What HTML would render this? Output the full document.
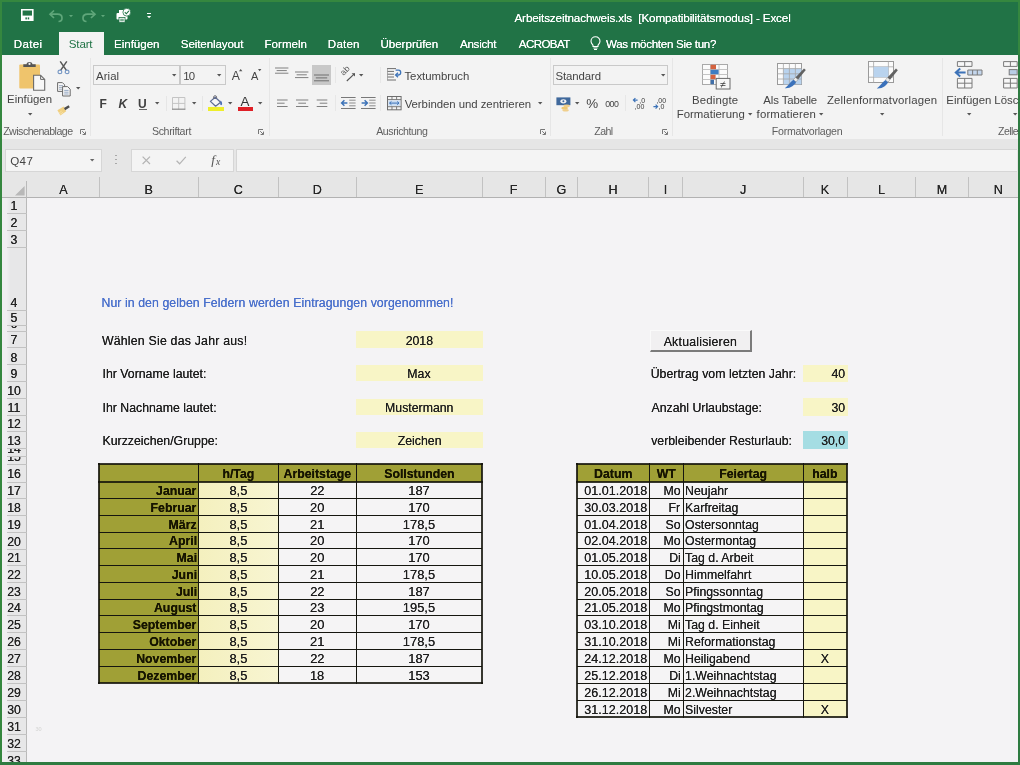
<!DOCTYPE html>
<html lang="de"><head><meta charset="utf-8"><title>Arbeitszeitnachweis.xls [Kompatibilitätsmodus] - Excel</title>
<style>
html,body{margin:0;padding:0}
body{width:1020px;height:765px;overflow:hidden;position:relative;background:#35873f;font-family:"Liberation Sans",Arial,sans-serif}
.app{position:absolute;left:0;top:0;width:1020px;height:765px;overflow:hidden;will-change:transform}
.t{position:absolute;white-space:pre;display:block}
.s{text-shadow:0 0 0.5px currentColor}
.b{position:absolute;display:block}
svg{overflow:visible}
</style></head>
<body>
<div class="app">
<div class="b" style="left:2px;top:2px;width:1016px;height:53px;background:#217346;"></div>
<div class="b" style="left:59px;top:32px;width:44.5px;height:24px;background:#f3f3f3;"></div>
<div class="b" style="left:2px;top:54.5px;width:1015.5px;height:84.5px;background:#f3f3f3;"></div>
<div class="b" style="left:2px;top:139px;width:1015.5px;height:58.5px;background:#e6e6e6;"></div>
<div class="b" style="left:27px;top:197.5px;width:990.5px;height:564.5px;background:#f4f3f5;"></div>
<div class="b" style="left:2px;top:197.5px;width:25px;height:564.5px;background:linear-gradient(90deg,#f0eff1 0,#f0eff1 18%,#e7e7e8 34%,#e7e7e8 100%);"></div>
<span class="t s" style="left:514.48px;top:11px;font-size:11.7px;line-height:13px;color:#ffffff;letter-spacing:-0.14px;">Arbeitszeitnachweis.xls  [Kompatibilitätsmodus] - Excel</span>
<span class="t s" style="left:13.75px;top:38px;font-size:11.6px;line-height:12px;color:#ffffff;letter-spacing:0.31px;">Datei</span>
<span class="t s" style="left:114.05px;top:38px;font-size:11.6px;line-height:12px;color:#ffffff;letter-spacing:-0.04px;">Einfügen</span>
<span class="t s" style="left:180.77px;top:38px;font-size:11.6px;line-height:12px;color:#ffffff;letter-spacing:-0.11px;">Seitenlayout</span>
<span class="t s" style="left:264.55px;top:38px;font-size:11.6px;line-height:12px;color:#ffffff;letter-spacing:-0.01px;">Formeln</span>
<span class="t s" style="left:327.85px;top:38px;font-size:11.6px;line-height:12px;color:#ffffff;letter-spacing:0.19px;">Daten</span>
<span class="t s" style="left:380.41px;top:38px;font-size:11.6px;line-height:12px;color:#ffffff;letter-spacing:-0.02px;">Überprüfen</span>
<span class="t s" style="left:459.98px;top:38px;font-size:11.6px;line-height:12px;color:#ffffff;letter-spacing:-0.27px;">Ansicht</span>
<span class="t s" style="left:518.78px;top:38px;font-size:11.6px;line-height:12px;color:#ffffff;letter-spacing:-0.6px;">ACROBAT</span>
<span class="t s" style="left:605.95px;top:38px;font-size:11.6px;line-height:12px;color:#ffffff;letter-spacing:-0.3px;">Was möchten Sie tun?</span>
<span class="t" style="left:68.77px;top:38px;font-size:11.6px;line-height:12px;color:#217346;letter-spacing:-0.17px;">Start</span>
<svg class="b" style="left:20.8px;top:9.2px" width="12.6" height="12" viewBox="0 0 12.6 12"><path d="M0.8,0.8H11.8V11.2H0.8Z" fill="none" stroke="#fff" stroke-width="1.6"/><rect x="0.8" y="6.6" width="11" height="4.6" fill="#fff"/><rect x="4.4" y="8.4" width="1.5" height="2" fill="#217346"/><rect x="6.7" y="8.4" width="1.5" height="2" fill="#217346"/></svg>
<svg class="b" style="left:48.5px;top:10px" width="14" height="12" viewBox="0 0 14 12"><path d="M1,4.2H8.5C11.5,4.2 13,6 13,8C13,10 11.5,11.5 9.5,11.5" fill="none" stroke="#5fa67a" stroke-width="1.7"/><path d="M5,0.5L1,4.2L5,8" fill="none" stroke="#5fa67a" stroke-width="1.7"/></svg>
<svg class="b" style="left:68.8px;top:15.2px" width="4" height="2.2" viewBox="0 0 4 2.2"><polygon points="0,0 4,0 2,2.2" fill="#5fa67a"/></svg>
<svg class="b" style="left:82px;top:10px" width="14" height="12" viewBox="0 0 14 12"><path d="M13,4.2H5.5C2.5,4.2 1,6 1,8C1,10 2.5,11.5 4.5,11.5" fill="none" stroke="#5fa67a" stroke-width="1.7"/><path d="M9,0.5L13,4.2L9,8" fill="none" stroke="#5fa67a" stroke-width="1.7"/></svg>
<svg class="b" style="left:101px;top:15.2px" width="4" height="2.2" viewBox="0 0 4 2.2"><polygon points="0,0 4,0 2,2.2" fill="#5fa67a"/></svg>
<svg class="b" style="left:115.5px;top:7.5px" width="15" height="15" viewBox="0 0 15 15"><rect x="0.5" y="5" width="11" height="6.5" rx="1" fill="#fff"/><rect x="3" y="2" width="6" height="4" fill="#fff"/><rect x="3" y="9.5" width="6" height="5" fill="#fff" stroke="#217346" stroke-width="0.8"/><circle cx="10.8" cy="4.2" r="3.9" fill="#fff" stroke="#217346" stroke-width="0.8"/><path d="M8.8,4.2L10.3,5.8L12.9,2.8" fill="none" stroke="#217346" stroke-width="1.1"/><rect x="4.2" y="10.8" width="3.6" height="0.8" fill="#217346"/><rect x="4.2" y="12.4" width="3.6" height="0.8" fill="#217346"/></svg>
<div class="b" style="left:147.2px;top:13.2px;width:4.2px;height:1.2px;background:#fff;"></div>
<svg class="b" style="left:147.2px;top:15.8px" width="4.2" height="2.2" viewBox="0 0 4.2 2.2"><polygon points="0,0 4.2,0 2.1,2.2" fill="#fff"/></svg>
<svg class="b" style="left:590px;top:36px" width="11" height="14" viewBox="0 0 11 14"><path d="M5.5,0.8C2.8,0.8 1,2.8 1,5.2C1,7 2,8 3,9.2V10.5H8V9.2C9,8 10,7 10,5.2C10,2.8 8.2,0.8 5.5,0.8Z" fill="none" stroke="#fff" stroke-width="1.1"/><path d="M3.4,12H7.6M4,13.5H7" stroke="#fff" stroke-width="1" fill="none"/></svg>
<div class="b" style="left:90px;top:57.5px;width:1px;height:78.5px;background:#e6e6e6;"></div>
<div class="b" style="left:268.5px;top:57.5px;width:1px;height:78.5px;background:#e6e6e6;"></div>
<div class="b" style="left:549.9px;top:57.5px;width:1px;height:78.5px;background:#e6e6e6;"></div>
<div class="b" style="left:672.2px;top:57.5px;width:1px;height:78.5px;background:#e6e6e6;"></div>
<div class="b" style="left:941.8px;top:57.5px;width:1px;height:78.5px;background:#e6e6e6;"></div>
<span class="t" style="left:3.16px;top:125px;font-size:10.6px;line-height:12px;color:#5e5e5e;letter-spacing:-0.51px;">Zwischenablage</span>
<svg class="b" style="left:79.5px;top:129px" width="6" height="6" viewBox="0 0 6 6"><path d="M0.5,5V0.5H5" fill="none" stroke="#777" stroke-width="1"/><path d="M2.2,2.2L5.3,5.3M5.5,2.6V5.5H2.6" fill="none" stroke="#777" stroke-width="1"/></svg>
<span class="t" style="left:151.92px;top:125px;font-size:10.6px;line-height:12px;color:#5e5e5e;letter-spacing:-0.33px;">Schriftart</span>
<svg class="b" style="left:258px;top:129px" width="6" height="6" viewBox="0 0 6 6"><path d="M0.5,5V0.5H5" fill="none" stroke="#777" stroke-width="1"/><path d="M2.2,2.2L5.3,5.3M5.5,2.6V5.5H2.6" fill="none" stroke="#777" stroke-width="1"/></svg>
<span class="t" style="left:376.18px;top:125px;font-size:10.6px;line-height:12px;color:#5e5e5e;letter-spacing:-0.42px;">Ausrichtung</span>
<svg class="b" style="left:539.5px;top:129.3px" width="6" height="6" viewBox="0 0 6 6"><path d="M0.5,5V0.5H5" fill="none" stroke="#777" stroke-width="1"/><path d="M2.2,2.2L5.3,5.3M5.5,2.6V5.5H2.6" fill="none" stroke="#777" stroke-width="1"/></svg>
<span class="t" style="left:594.36px;top:125px;font-size:10.6px;line-height:12px;color:#5e5e5e;letter-spacing:-0.6px;">Zahl</span>
<svg class="b" style="left:662px;top:129.3px" width="6" height="6" viewBox="0 0 6 6"><path d="M0.5,5V0.5H5" fill="none" stroke="#777" stroke-width="1"/><path d="M2.2,2.2L5.3,5.3M5.5,2.6V5.5H2.6" fill="none" stroke="#777" stroke-width="1"/></svg>
<span class="t" style="left:771.83px;top:125px;font-size:10.6px;line-height:12px;color:#5e5e5e;letter-spacing:-0.26px;">Formatvorlagen</span>
<span class="t" style="left:998.06px;top:125px;font-size:10.6px;line-height:12px;color:#5e5e5e;letter-spacing:-0.6px;">Zelle</span>
<svg class="b" style="left:19px;top:60.5px" width="27" height="30" viewBox="0 0 27 30"><rect x="0.3" y="3.5" width="20.7" height="24" rx="1" fill="#efc46c"/><path d="M4.3,5.9V3.2H7.6C7.6,0.2 13.4,0.2 13.4,3.2H16.7V5.9Z" fill="#555"/><circle cx="10.5" cy="2.9" r="1.1" fill="#f3f3f3"/><path d="M14.6,14.3H21.6L25.7,18.4V29.2H14.6Z" fill="#f7f7f7" stroke="#6a6a6a" stroke-width="1.1"/><path d="M21.6,14.3V18.4H25.7" fill="none" stroke="#6a6a6a" stroke-width="1"/></svg>
<span class="t" style="left:7.06px;top:93px;font-size:11.4px;line-height:12px;color:#444444;letter-spacing:-0px;">Einfügen</span>
<svg class="b" style="left:27.5px;top:112.5px" width="4.4" height="2.4" viewBox="0 0 4.4 2.4"><polygon points="0,0 4.4,0 2.2,2.4" fill="#555"/></svg>
<svg class="b" style="left:57px;top:61px" width="13" height="13.5" viewBox="0 0 13 13.5"><path d="M3.2,0.4L9.4,9.4M9.8,0.4L3.6,9.4" stroke="#585858" stroke-width="1.5" fill="none"/><ellipse cx="2.9" cy="10.9" rx="1.9" ry="1.8" fill="none" stroke="#7898c4" stroke-width="1.2"/><ellipse cx="10.1" cy="10.9" rx="1.9" ry="1.8" fill="none" stroke="#7898c4" stroke-width="1.2"/></svg>
<svg class="b" style="left:56.5px;top:82px" width="14" height="14.5" viewBox="0 0 14 14.5"><path d="M0.6,0.6H5.4L7.6,2.8V9.4H0.6Z" fill="#f7f7f7" stroke="#6a6a6a" stroke-width="1"/><path d="M2,3.6H6M2,5.4H6M2,7.2H6" stroke="#8a9bb4" stroke-width="0.8"/><path d="M5.6,4.6H10.6L13.2,7.2V14H5.6Z" fill="#f7f7f7" stroke="#6a6a6a" stroke-width="1"/><path d="M7.2,8.4H11.6M7.2,10.2H11.6M7.2,12H11.6" stroke="#7e95b8" stroke-width="0.8"/></svg>
<svg class="b" style="left:76.3px;top:87.1px" width="4.4" height="2.4" viewBox="0 0 4.4 2.4"><polygon points="0,0 4.4,0 2.2,2.4" fill="#555"/></svg>
<svg class="b" style="left:57px;top:104.5px" width="13.5" height="11.5" viewBox="0 0 13.5 11.5"><path d="M0.4,5.2L6.6,1.4L9.2,6.2L3.4,10.6Z" fill="#f0cf80"/><path d="M2.2,7.8L4.6,6.2M3.2,9.2L6.2,7.2" stroke="#f8e8b8" stroke-width="0.7"/><path d="M6.9,2.9L11.6,0.2L12.8,2.2L8.2,5.2Z" fill="#4e4e4e"/></svg>
<div class="b" style="left:93.3px;top:65.3px;width:86.7px;height:20px;border:1px solid #c9c9c9;box-sizing:border-box;"></div>
<div class="b" style="left:179.5px;top:65.3px;width:46px;height:20px;border:1px solid #c9c9c9;box-sizing:border-box;"></div>
<span class="t" style="left:95.98px;top:70px;font-size:11.4px;line-height:12px;color:#444444;letter-spacing:0.09px;">Arial</span>
<svg class="b" style="left:171.8px;top:73.9px" width="4.4" height="2.4" viewBox="0 0 4.4 2.4"><polygon points="0,0 4.4,0 2.2,2.4" fill="#555"/></svg>
<span class="t" style="left:183.13px;top:70px;font-size:11.4px;line-height:12px;color:#444444;letter-spacing:-0.6px;">10</span>
<svg class="b" style="left:217.4px;top:73.9px" width="4.4" height="2.4" viewBox="0 0 4.4 2.4"><polygon points="0,0 4.4,0 2.2,2.4" fill="#555"/></svg>
<span class="t" style="left:231.78px;top:69px;font-size:12.2px;line-height:14px;color:#444444;">A</span>
<svg class="b" style="left:239.2px;top:68.6px" width="3.4" height="2.2" viewBox="0 0 3.4 2.2"><polygon points="0,2.2 3.4,2.2 1.7,0" fill="#555"/></svg>
<span class="t" style="left:250.98px;top:70px;font-size:11px;line-height:12px;color:#444444;">A</span>
<svg class="b" style="left:258.3px;top:68.9px" width="3.4" height="2.2" viewBox="0 0 3.4 2.2"><polygon points="0,0 3.4,0 1.7,2.2" fill="#555"/></svg>
<span class="t" style="left:99.4px;top:97px;font-size:12px;line-height:14px;color:#404040;font-weight:bold;">F</span>
<span class="t" style="left:118.39px;top:97px;font-size:12px;line-height:14px;color:#404040;font-weight:bold;font-style:italic;">K</span>
<span class="t" style="left:137.88px;top:97px;font-size:12px;line-height:14px;color:#404040;font-weight:bold;">U</span>
<div class="b" style="left:138.8px;top:109.2px;width:8px;height:0.8px;background:#666;"></div>
<svg class="b" style="left:155.4px;top:101.6px" width="4.4" height="2.4" viewBox="0 0 4.4 2.4"><polygon points="0,0 4.4,0 2.2,2.4" fill="#555"/></svg>
<div class="b" style="left:165.5px;top:96px;width:1px;height:15px;background:#e6e6e6;"></div>
<svg class="b" style="left:172.4px;top:96.7px" width="13.4" height="12.8" viewBox="0 0 13.4 12.8"><path d="M0.5,0.5H12.9V12.3M0.5,0.5V12.3M6.7,0.5V12.3M0.5,6.4H12.9" fill="none" stroke="#c4c4c4" stroke-width="1"/><path d="M0,12.2H13.4" stroke="#8a8a8a" stroke-width="1.2"/></svg>
<svg class="b" style="left:191.8px;top:101.6px" width="4.4" height="2.4" viewBox="0 0 4.4 2.4"><polygon points="0,0 4.4,0 2.2,2.4" fill="#555"/></svg>
<div class="b" style="left:202.2px;top:96px;width:1px;height:15px;background:#e6e6e6;"></div>
<svg class="b" style="left:209px;top:94.6px" width="14.5" height="12" viewBox="0 0 14.5 12"><path d="M6.2,2.2L11.6,7.2L6.6,11.2L1.4,6.4Z" fill="#f6f6f8" stroke="#5f6d94" stroke-width="1.25" stroke-linejoin="round"/><path d="M4.6,3.8V2C4.6,0.2 7.6,0.2 7.6,2V3.4" fill="none" stroke="#6a6a72" stroke-width="0.9"/><path d="M11.4,5.6C12.8,6.6 13.4,8.2 13,9.6C12.4,10.6 11.2,10.2 11.2,9Z" fill="#4c6fb4"/></svg>
<div class="b" style="left:207.7px;top:107px;width:16.6px;height:3.7px;background:#eeee2a;"></div>
<svg class="b" style="left:228.2px;top:101.6px" width="4.4" height="2.4" viewBox="0 0 4.4 2.4"><polygon points="0,0 4.4,0 2.2,2.4" fill="#555"/></svg>
<span class="t" style="left:240.57px;top:94px;font-size:13.4px;line-height:15px;color:#333;">A</span>
<div class="b" style="left:238px;top:107px;width:15.3px;height:3.7px;background:#df1f26;"></div>
<svg class="b" style="left:257.8px;top:101.6px" width="4.4" height="2.4" viewBox="0 0 4.4 2.4"><polygon points="0,0 4.4,0 2.2,2.4" fill="#555"/></svg>
<svg class="b" style="left:275.3px;top:67.2px" width="20" height="8.2" viewBox="0 0 20 8.2"><rect x="0" y="0.5" width="13.4" height="1" fill="#808080"/><rect x="1.6" y="3.1" width="10.2" height="1" fill="#808080"/><rect x="0" y="5.7" width="13.4" height="1" fill="#808080"/></svg>
<svg class="b" style="left:295px;top:71.2px" width="20" height="8.6" viewBox="0 0 20 8.6"><rect x="0" y="0.5" width="13.4" height="1" fill="#808080"/><rect x="1.6" y="3.3" width="10.2" height="1" fill="#808080"/><rect x="0" y="6.1" width="13.4" height="1" fill="#808080"/></svg>
<div class="b" style="left:312px;top:65.3px;width:19.3px;height:20px;background:#c8c8c8;"></div>
<svg class="b" style="left:313.8px;top:73.9px" width="20" height="8.8" viewBox="0 0 20 8.8"><rect x="0" y="0.5" width="15" height="1" fill="#6e6e6e"/><rect x="1.8" y="3.4" width="11.4" height="1" fill="#6e6e6e"/><rect x="0" y="6.3" width="15" height="1" fill="#6e6e6e"/></svg>
<div class="b" style="left:334.5px;top:67px;width:1px;height:16px;background:#e7e7e7;"></div>
<svg class="b" style="left:340.5px;top:68.5px" width="15" height="12.5" viewBox="0 0 15 12.5"><text x="0" y="0" transform="translate(2.6,7) rotate(-45)" font-size="8.6" font-family="Liberation Sans, sans-serif" fill="#555">ab</text><path d="M5.8,12L13.6,4.6" stroke="#555" stroke-width="1.1"/><path d="M10.6,4.2H14V7.6Z" fill="#555"/></svg>
<svg class="b" style="left:359px;top:73.9px" width="4.4" height="2.4" viewBox="0 0 4.4 2.4"><polygon points="0,0 4.4,0 2.2,2.4" fill="#555"/></svg>
<div class="b" style="left:380.2px;top:67px;width:1px;height:16px;background:#e7e7e7;"></div>
<svg class="b" style="left:276.7px;top:98.6px" width="20" height="9.5" viewBox="0 0 20 9.5"><rect x="0" y="0.5" width="10.6" height="1" fill="#808080"/><rect x="0" y="3.7" width="7.6" height="1" fill="#808080"/><rect x="0" y="7" width="10.6" height="1" fill="#808080"/></svg>
<svg class="b" style="left:295.7px;top:98.6px" width="20" height="9.5" viewBox="0 0 20 9.5"><rect x="0" y="0.5" width="12.3" height="1" fill="#808080"/><rect x="2.3" y="3.7" width="7.7" height="1" fill="#808080"/><rect x="0" y="7" width="12.3" height="1" fill="#808080"/></svg>
<svg class="b" style="left:316px;top:98.6px" width="20" height="9.5" viewBox="0 0 20 9.5"><rect x="0.7" y="0.5" width="10.6" height="1" fill="#808080"/><rect x="3.7" y="3.7" width="7.6" height="1" fill="#808080"/><rect x="0.7" y="7" width="10.6" height="1" fill="#808080"/></svg>
<div class="b" style="left:334.5px;top:95px;width:1px;height:16px;background:#e7e7e7;"></div>
<svg class="b" style="left:340.7px;top:97.3px" width="14.6" height="12" viewBox="0 0 14.6 12"><path d="M0,0.5H14.6M0,11.5H14.6" stroke="#777" stroke-width="1"/><path d="M8.2,3.2H14.6M8.2,6H14.6M8.2,8.8H14.6" stroke="#8c8c8c" stroke-width="1"/><path d="M0.6,6H6.4M3.4,3.2L0.6,6L3.4,8.8" fill="none" stroke="#3d73b8" stroke-width="1.5"/></svg>
<svg class="b" style="left:360.7px;top:97.3px" width="14.6" height="12" viewBox="0 0 14.6 12"><path d="M0,0.5H14.6M0,11.5H14.6" stroke="#777" stroke-width="1"/><path d="M8.2,3.2H14.6M8.2,6H14.6M8.2,8.8H14.6" stroke="#8c8c8c" stroke-width="1"/><path d="M0.6,6H6.4M3.6,3.2L6.4,6L3.6,8.8" fill="none" stroke="#3d73b8" stroke-width="1.5"/></svg>
<div class="b" style="left:380.2px;top:95px;width:1px;height:16px;background:#e7e7e7;"></div>
<svg class="b" style="left:387px;top:68px" width="14.5" height="14" viewBox="0 0 14.5 14"><path d="M0,0.6H9M0,3.4H7M0,6.2H7M0,9H7M0,12H9" stroke="#6e6e6e" stroke-width="1"/><path d="M0.5,0.6V12" stroke="#9a9a9a" stroke-width="0.8"/><path d="M8.6,2.2H11.6C14.4,2.2 14.4,7 11.6,7H9.2" fill="none" stroke="#3d73b8" stroke-width="1.3"/><path d="M11,4.8L8.6,7L11,9.2" fill="none" stroke="#3d73b8" stroke-width="1.3"/></svg>
<span class="t" style="left:404.44px;top:70px;font-size:11.4px;line-height:12px;color:#444444;letter-spacing:-0.03px;">Textumbruch</span>
<svg class="b" style="left:387px;top:95.7px" width="14.6" height="14.3" viewBox="0 0 14.6 14.3"><rect x="0.5" y="0.5" width="13.6" height="13.3" fill="none" stroke="#6e6e6e" stroke-width="1"/><path d="M0.5,3.6H14.1M0.5,10.7H14.1M5,0.5V3.6M9.6,0.5V3.6M5,10.7V13.8M9.6,10.7V13.8" stroke="#6e6e6e" stroke-width="0.9" fill="none"/><rect x="1.4" y="4.5" width="11.8" height="5.3" fill="#c9dcf2"/><path d="M2.6,7.1H12M4.4,5.5L2.6,7.1L4.4,8.7M10.2,5.5L12,7.1L10.2,8.7" fill="none" stroke="#3d73b8" stroke-width="1"/></svg>
<span class="t" style="left:404.65px;top:98px;font-size:11.4px;line-height:12px;color:#444444;letter-spacing:-0.04px;">Verbinden und zentrieren</span>
<svg class="b" style="left:538.1px;top:101.6px" width="4.4" height="2.4" viewBox="0 0 4.4 2.4"><polygon points="0,0 4.4,0 2.2,2.4" fill="#555"/></svg>
<div class="b" style="left:553.3px;top:65.3px;width:115px;height:20px;border:1px solid #c9c9c9;box-sizing:border-box;"></div>
<span class="t" style="left:555.48px;top:70px;font-size:11.4px;line-height:12px;color:#444444;letter-spacing:-0.1px;">Standard</span>
<svg class="b" style="left:660.8px;top:73.9px" width="4.4" height="2.4" viewBox="0 0 4.4 2.4"><polygon points="0,0 4.4,0 2.2,2.4" fill="#555"/></svg>
<svg class="b" style="left:555.5px;top:96.5px" width="15.5" height="14.5" viewBox="0 0 15.5 14.5"><rect x="0.4" y="0.4" width="14" height="7.8" fill="#40699c"/><ellipse cx="7.4" cy="4.3" rx="3" ry="2.1" fill="#f3f3f3"/><circle cx="7.4" cy="4.3" r="1" fill="#40699c"/><ellipse cx="10.6" cy="9" rx="3.2" ry="1.4" fill="#f0cf8c"/><ellipse cx="8.6" cy="11.2" rx="3.2" ry="1.4" fill="#efc873"/><ellipse cx="9.6" cy="13.2" rx="3.2" ry="1.3" fill="#f0cf8c"/></svg>
<svg class="b" style="left:575.4px;top:101.6px" width="4.4" height="2.4" viewBox="0 0 4.4 2.4"><polygon points="0,0 4.4,0 2.2,2.4" fill="#555"/></svg>
<span class="t" style="left:586.32px;top:96px;font-size:13.4px;line-height:15px;color:#444444;">%</span>
<span class="t" style="left:605.16px;top:99px;font-size:8.8px;line-height:10px;color:#444444;letter-spacing:-0.5px;">000</span>
<div class="b" style="left:624.8px;top:95px;width:1px;height:16px;background:#e7e7e7;"></div>
<svg class="b" style="left:633.3px;top:97.3px" width="12.6" height="12.8" viewBox="0 0 12.6 12.8"><path d="M0.4,3.1H4.6M2.4,1.1L0.4,3.1L2.4,5.1" fill="none" stroke="#3d73b8" stroke-width="1.2"/><text x="6.2" y="5.6" font-size="7" font-family="Liberation Sans, sans-serif" fill="#3a3a3a">,0</text><text x="1.6" y="12.4" font-size="7" font-family="Liberation Sans, sans-serif" fill="#3a3a3a">,00</text></svg>
<svg class="b" style="left:652.7px;top:97.3px" width="12.6" height="12.8" viewBox="0 0 12.6 12.8"><path d="M0.4,9.6H4.6M2.6,7.6L4.6,9.6L2.6,11.6" fill="none" stroke="#3d73b8" stroke-width="1.2"/><text x="3.4" y="5.6" font-size="7" font-family="Liberation Sans, sans-serif" fill="#3a3a3a">,00</text><text x="5.6" y="12.4" font-size="7" font-family="Liberation Sans, sans-serif" fill="#3a3a3a">,0</text></svg>
<svg class="b" style="left:702.4px;top:64px" width="28.5" height="25.5" viewBox="0 0 28.5 25.5"><rect x="0.5" y="0.5" width="25" height="20" fill="#fbfbfb" stroke="#a9a9a9" stroke-width="1"/><path d="M0.5,5.5H25.5M0.5,10.5H25.5M0.5,15.5H25.5M8.5,0.5V20.5M17,0.5V20.5" stroke="#bdbdbd" stroke-width="0.9"/><rect x="8.6" y="0.8" width="5.4" height="4.4" fill="#d4623f"/><rect x="8.6" y="5.8" width="8" height="4.4" fill="#3c7cc2"/><rect x="8.6" y="10.8" width="5" height="4.4" fill="#d4623f"/><rect x="8.6" y="15.8" width="3.4" height="4.4" fill="#3f6ea8"/><rect x="14.2" y="14.4" width="13.8" height="10.6" fill="#f7f7f7" stroke="#6a6a6a" stroke-width="1"/><text x="21.1" y="23.6" text-anchor="middle" font-size="10.5" font-family="Liberation Sans, sans-serif" fill="#3c3c3c">≠</text></svg>
<span class="t" style="left:692.06px;top:94px;font-size:11.4px;line-height:12px;color:#444444;letter-spacing:0.15px;">Bedingte</span>
<span class="t" style="left:676.66px;top:108px;font-size:11.4px;line-height:12px;color:#444444;letter-spacing:0.03px;">Formatierung</span>
<svg class="b" style="left:747.8px;top:112.5px" width="4.4" height="2.4" viewBox="0 0 4.4 2.4"><polygon points="0,0 4.4,0 2.2,2.4" fill="#555"/></svg>
<svg class="b" style="left:777.3px;top:63.3px" width="29" height="26.5" viewBox="0 0 29 26.5"><rect x="0.5" y="0.5" width="24" height="21" fill="#fbfbfb" stroke="#9a9a9a" stroke-width="1"/><rect x="6.4" y="5.6" width="18" height="15.8" fill="#b9d3ee"/><path d="M0.5,5.6H24.5M0.5,10.8H24.5M0.5,16H24.5M6.4,0.5V21.5M12.4,0.5V21.5M18.4,0.5V21.5" stroke="#a6a6a6" stroke-width="0.8"/><g transform="translate(7.4,5.2)"><path d="M19.6,0.2L21.4,1.8L13.6,11.4L11,9.2Z" fill="#626262"/><path d="M11,9.2L13.6,11.4L11.6,13.8L9,11.6Z" fill="#ececec" stroke="#8a8a8a" stroke-width="0.5"/><path d="M9,11.6L11.6,13.8C10,17 6.4,20.4 0.4,20C3.2,18.4 5.2,14.6 9,11.6Z" fill="#3b72bb"/></g></svg>
<span class="t" style="left:763.28px;top:94px;font-size:11.4px;line-height:12px;color:#444444;letter-spacing:-0.1px;">Als Tabelle</span>
<span class="t" style="left:756.54px;top:108px;font-size:11.4px;line-height:12px;color:#444444;letter-spacing:0.18px;">formatieren</span>
<svg class="b" style="left:819.3px;top:112.5px" width="4.4" height="2.4" viewBox="0 0 4.4 2.4"><polygon points="0,0 4.4,0 2.2,2.4" fill="#555"/></svg>
<svg class="b" style="left:868px;top:60.7px" width="30" height="28" viewBox="0 0 30 28"><rect x="0.5" y="0.5" width="25" height="21" fill="#fbfbfb" stroke="#9a9a9a" stroke-width="1"/><path d="M0.5,5.8H25.5M0.5,16.2H25.5M5.6,0.5V21.5M20.4,0.5V21.5" stroke="#a6a6a6" stroke-width="0.8"/><rect x="5.6" y="5.8" width="14.8" height="10.4" fill="#b9d3ee"/><g transform="translate(8.4,7.4)"><path d="M19.6,0.2L21.4,1.8L13.6,11.4L11,9.2Z" fill="#626262"/><path d="M11,9.2L13.6,11.4L11.6,13.8L9,11.6Z" fill="#ececec" stroke="#8a8a8a" stroke-width="0.5"/><path d="M9,11.6L11.6,13.8C10,17 6.4,20.4 0.4,20C3.2,18.4 5.2,14.6 9,11.6Z" fill="#3b72bb"/></g></svg>
<span class="t" style="left:826.94px;top:94px;font-size:11.4px;line-height:12px;color:#444444;letter-spacing:0.16px;">Zellenformatvorlagen</span>
<svg class="b" style="left:880.3px;top:112.5px" width="4.4" height="2.4" viewBox="0 0 4.4 2.4"><polygon points="0,0 4.4,0 2.2,2.4" fill="#555"/></svg>
<svg class="b" style="left:955px;top:61px" width="27.5" height="27.5" viewBox="0 0 27.5 27.5"><path d="M2.4,0.6H17V5.4H2.4ZM9.7,0.6V5.4" fill="#f7f7f7" stroke="#7a7a7a" stroke-width="1"/><path d="M12.8,9H27V14H12.8ZM17.6,9V14M22.3,9V14" fill="#c4d6ec" stroke="#7a7a7a" stroke-width="1"/><path d="M0.8,11.5H10.6M5.2,7.6L0.8,11.5L5.2,15.4" fill="none" stroke="#3d73b8" stroke-width="2"/><path d="M2.4,17.4H17V27H2.4ZM9.7,17.4V27M2.4,22.2H17" fill="#f7f7f7" stroke="#7a7a7a" stroke-width="1"/></svg>
<span class="t" style="left:946.36px;top:94px;font-size:11.4px;line-height:12px;color:#444444;letter-spacing:0.01px;">Einfügen</span>
<svg class="b" style="left:967px;top:112.5px" width="4.4" height="2.4" viewBox="0 0 4.4 2.4"><polygon points="0,0 4.4,0 2.2,2.4" fill="#555"/></svg>
<svg class="b" style="left:1003.3px;top:61px" width="14.2" height="27.5" viewBox="0 0 14.2 27.5"><path d="M0.6,0.6H14.2V5.4H0.6ZM7.4,0.6V5.4" fill="#f7f7f7" stroke="#7a7a7a" stroke-width="1"/><rect x="6.2" y="8.6" width="8" height="5.2" fill="#b9cde6" stroke="#7a7a7a" stroke-width="1"/><path d="M0.6,17.4H14.2V27H0.6ZM7.4,17.4V27M0.6,22.2H14.2" fill="#f7f7f7" stroke="#7a7a7a" stroke-width="1"/></svg>
<span class="t" style="left:994.36px;top:94px;font-size:11.4px;line-height:12px;color:#444444;">Lösc</span>
<svg class="b" style="left:1013.4px;top:112.5px" width="4.4" height="2.4" viewBox="0 0 4.4 2.4"><polygon points="0,0 4.4,0 2.2,2.4" fill="#555"/></svg>
<div class="b" style="left:5px;top:149px;width:96.5px;height:22.6px;background:#f4f4f4;border:1px solid #d6d6d6;box-sizing:border-box;"></div>
<span class="t" style="left:10.15px;top:155px;font-size:11.6px;line-height:12px;color:#444;letter-spacing:0.4px;">Q47</span>
<svg class="b" style="left:90.1px;top:159.2px" width="4.4" height="2.4" viewBox="0 0 4.4 2.4"><polygon points="0,0 4.4,0 2.2,2.4" fill="#666"/></svg>
<div class="b" style="left:115.3px;top:154.6px;width:1.4px;height:1.4px;background:#a0a0a0;border-radius:1px;"></div>
<div class="b" style="left:115.3px;top:158.6px;width:1.4px;height:1.4px;background:#a0a0a0;border-radius:1px;"></div>
<div class="b" style="left:115.3px;top:162.6px;width:1.4px;height:1.4px;background:#a0a0a0;border-radius:1px;"></div>
<div class="b" style="left:130.6px;top:149px;width:103.8px;height:22.6px;background:#f4f4f4;border:1px solid #d6d6d6;box-sizing:border-box;"></div>
<svg class="b" style="left:142.4px;top:156px" width="8.6" height="8.6" viewBox="0 0 8.6 8.6"><path d="M0.6,0.6L8,8M8,0.6L0.6,8" stroke="#b4b4b4" stroke-width="1.2" fill="none"/></svg>
<svg class="b" style="left:176.4px;top:156px" width="10.4" height="8.6" viewBox="0 0 10.4 8.6"><path d="M0.6,4.8L3.6,7.8L9.8,0.8" stroke="#b4b4b4" stroke-width="1.2" fill="none"/></svg>
<span class="t" style="left:211.15px;top:152px;font-size:13.4px;line-height:15px;color:#555;font-style:italic;font-family:'Liberation Serif',serif;">f</span>
<span class="t" style="left:215.98px;top:156px;font-size:9.6px;line-height:11px;color:#555;font-style:italic;font-family:'Liberation Serif',serif;">x</span>
<div class="b" style="left:236.2px;top:149px;width:781.3px;height:22.6px;background:#f4f4f4;border:1px solid #d6d6d6;border-right:none;box-sizing:border-box;"></div>
<div class="b" style="left:2px;top:196.8px;width:1015.5px;height:1px;background:#b2b2b2;"></div>
<span class="t s" style="left:59.25px;top:183px;font-size:12.6px;line-height:14px;color:#262626;">A</span>
<div class="b" style="left:99px;top:176.5px;width:1px;height:20.5px;background:#c2c2c2;"></div>
<span class="t s" style="left:144.56px;top:183px;font-size:12.6px;line-height:14px;color:#262626;">B</span>
<div class="b" style="left:197.5px;top:176.5px;width:1px;height:20.5px;background:#c2c2c2;"></div>
<span class="t s" style="left:233.82px;top:183px;font-size:12.6px;line-height:14px;color:#262626;">C</span>
<div class="b" style="left:278px;top:176.5px;width:1px;height:20.5px;background:#c2c2c2;"></div>
<span class="t s" style="left:312.68px;top:183px;font-size:12.6px;line-height:14px;color:#262626;">D</span>
<div class="b" style="left:355.5px;top:176.5px;width:1px;height:20.5px;background:#c2c2c2;"></div>
<span class="t s" style="left:415px;top:183px;font-size:12.6px;line-height:14px;color:#262626;">E</span>
<div class="b" style="left:482px;top:176.5px;width:1px;height:20.5px;background:#c2c2c2;"></div>
<span class="t s" style="left:509.84px;top:183px;font-size:12.6px;line-height:14px;color:#262626;">F</span>
<div class="b" style="left:544.5px;top:176.5px;width:1px;height:20.5px;background:#c2c2c2;"></div>
<span class="t s" style="left:556.45px;top:183px;font-size:12.6px;line-height:14px;color:#262626;">G</span>
<div class="b" style="left:576.5px;top:176.5px;width:1px;height:20.5px;background:#c2c2c2;"></div>
<span class="t s" style="left:608.4px;top:183px;font-size:12.6px;line-height:14px;color:#262626;">H</span>
<div class="b" style="left:648px;top:176.5px;width:1px;height:20.5px;background:#c2c2c2;"></div>
<span class="t s" style="left:663.7px;top:183px;font-size:12.6px;line-height:14px;color:#262626;">I</span>
<div class="b" style="left:681.5px;top:176.5px;width:1px;height:20.5px;background:#c2c2c2;"></div>
<span class="t s" style="left:739.92px;top:183px;font-size:12.6px;line-height:14px;color:#262626;">J</span>
<div class="b" style="left:802.5px;top:176.5px;width:1px;height:20.5px;background:#c2c2c2;"></div>
<span class="t s" style="left:820.8px;top:183px;font-size:12.6px;line-height:14px;color:#262626;">K</span>
<div class="b" style="left:847px;top:176.5px;width:1px;height:20.5px;background:#c2c2c2;"></div>
<span class="t s" style="left:877.89px;top:183px;font-size:12.6px;line-height:14px;color:#262626;">L</span>
<div class="b" style="left:915px;top:176.5px;width:1px;height:20.5px;background:#c2c2c2;"></div>
<span class="t s" style="left:936.7px;top:183px;font-size:12.6px;line-height:14px;color:#262626;">M</span>
<div class="b" style="left:967.5px;top:176.5px;width:1px;height:20.5px;background:#c2c2c2;"></div>
<span class="t s" style="left:993.65px;top:183px;font-size:12.6px;line-height:14px;color:#262626;">N</span>
<div class="b" style="left:1027.5px;top:176.5px;width:1px;height:20.5px;background:#c2c2c2;"></div>
<div class="b" style="left:26.3px;top:180.5px;width:1px;height:581.5px;background:#b9b9b9;"></div>
<svg class="b" style="left:15.2px;top:185.5px" width="9.6" height="9.6" viewBox="0 0 9.6 9.6"><polygon points="9.6,0 9.6,9.6 0,9.6" fill="#b8b8b8"/></svg>
<div class="b" style="left:2.5px;top:197.8px;width:24px;height:16px;overflow:hidden"><span class="t" style="left:0;width:23px;text-align:center;top:1.2px;font-size:12.3px;line-height:14px;color:#242424;text-shadow:0 0 0.5px #242424">1</span></div>
<div class="b" style="left:7px;top:213.3px;width:20px;height:1px;background:#c2c2c2;"></div>
<div class="b" style="left:2.5px;top:214.3px;width:24px;height:16.3px;overflow:hidden"><span class="t" style="left:0;width:23px;text-align:center;top:1.7px;font-size:12.3px;line-height:14px;color:#242424;text-shadow:0 0 0.5px #242424">2</span></div>
<div class="b" style="left:7px;top:230.1px;width:20px;height:1px;background:#c2c2c2;"></div>
<div class="b" style="left:2.5px;top:231.1px;width:24px;height:16.2px;overflow:hidden"><span class="t" style="left:0;width:23px;text-align:center;top:1.9px;font-size:12.3px;line-height:14px;color:#242424;text-shadow:0 0 0.5px #242424">3</span></div>
<div class="b" style="left:7px;top:246.8px;width:20px;height:1px;background:#c2c2c2;"></div>
<div class="b" style="left:2.5px;top:247.8px;width:24px;height:62.5px;overflow:hidden"><span class="t" style="left:0;width:23px;text-align:center;top:48.2px;font-size:12.3px;line-height:14px;color:#242424;text-shadow:0 0 0.5px #242424">4</span></div>
<div class="b" style="left:7px;top:309.8px;width:20px;height:1px;background:#c2c2c2;"></div>
<div class="b" style="left:2.5px;top:310.8px;width:24px;height:14.5px;overflow:hidden"><span class="t" style="left:0;width:23px;text-align:center;top:0.2px;font-size:12.3px;line-height:14px;color:#242424;text-shadow:0 0 0.5px #242424">5</span></div>
<div class="b" style="left:7px;top:324.8px;width:20px;height:1px;background:#c2c2c2;"></div>
<div class="b" style="left:2.5px;top:325.8px;width:24px;height:5.4px;overflow:hidden"><span class="t" style="left:0;width:23px;text-align:center;top:-8.8px;font-size:12.3px;line-height:14px;color:#242424;text-shadow:0 0 0.5px #242424">6</span></div>
<div class="b" style="left:7px;top:330.7px;width:20px;height:1px;background:#c2c2c2;"></div>
<div class="b" style="left:2.5px;top:331.7px;width:24px;height:16.2px;overflow:hidden"><span class="t" style="left:0;width:23px;text-align:center;top:1.3px;font-size:12.3px;line-height:14px;color:#242424;text-shadow:0 0 0.5px #242424">7</span></div>
<div class="b" style="left:7px;top:347.4px;width:20px;height:1px;background:#c2c2c2;"></div>
<div class="b" style="left:2.5px;top:348.4px;width:24px;height:16.5px;overflow:hidden"><span class="t" style="left:0;width:23px;text-align:center;top:2.6px;font-size:12.3px;line-height:14px;color:#242424;text-shadow:0 0 0.5px #242424">8</span></div>
<div class="b" style="left:7px;top:364.4px;width:20px;height:1px;background:#c2c2c2;"></div>
<div class="b" style="left:2.5px;top:365.4px;width:24px;height:16.2px;overflow:hidden"><span class="t" style="left:0;width:23px;text-align:center;top:1.6px;font-size:12.3px;line-height:14px;color:#242424;text-shadow:0 0 0.5px #242424">9</span></div>
<div class="b" style="left:7px;top:381.1px;width:20px;height:1px;background:#c2c2c2;"></div>
<div class="b" style="left:2.5px;top:382.1px;width:24px;height:16.3px;overflow:hidden"><span class="t" style="left:0;width:23px;text-align:center;top:1.9px;font-size:12.3px;line-height:14px;color:#242424;text-shadow:0 0 0.5px #242424">10</span></div>
<div class="b" style="left:7px;top:397.9px;width:20px;height:1px;background:#c2c2c2;"></div>
<div class="b" style="left:2.5px;top:398.9px;width:24px;height:16.2px;overflow:hidden"><span class="t" style="left:0;width:23px;text-align:center;top:2.1px;font-size:12.3px;line-height:14px;color:#242424;text-shadow:0 0 0.5px #242424">11</span></div>
<div class="b" style="left:7px;top:414.6px;width:20px;height:1px;background:#c2c2c2;"></div>
<div class="b" style="left:2.5px;top:415.6px;width:24px;height:16.2px;overflow:hidden"><span class="t" style="left:0;width:23px;text-align:center;top:1.4px;font-size:12.3px;line-height:14px;color:#242424;text-shadow:0 0 0.5px #242424">12</span></div>
<div class="b" style="left:7px;top:431.3px;width:20px;height:1px;background:#c2c2c2;"></div>
<div class="b" style="left:2.5px;top:432.3px;width:24px;height:16.1px;overflow:hidden"><span class="t" style="left:0;width:23px;text-align:center;top:1.7px;font-size:12.3px;line-height:14px;color:#242424;text-shadow:0 0 0.5px #242424">13</span></div>
<div class="b" style="left:7px;top:447.9px;width:20px;height:1px;background:#c2c2c2;"></div>
<div class="b" style="left:2.5px;top:448.9px;width:24px;height:7.4px;overflow:hidden"><span class="t" style="left:0;width:23px;text-align:center;top:-6.9px;font-size:12.3px;line-height:14px;color:#242424;text-shadow:0 0 0.5px #242424">14</span></div>
<div class="b" style="left:7px;top:455.8px;width:20px;height:1px;background:#c2c2c2;"></div>
<div class="b" style="left:2.5px;top:456.8px;width:24px;height:7.3px;overflow:hidden"><span class="t" style="left:0;width:23px;text-align:center;top:-6.8px;font-size:12.3px;line-height:14px;color:#242424;text-shadow:0 0 0.5px #242424">15</span></div>
<div class="b" style="left:7px;top:463.6px;width:20px;height:1px;background:#c2c2c2;"></div>
<div class="b" style="left:2.5px;top:464.6px;width:24px;height:17.45px;overflow:hidden"><span class="t" style="left:0;width:23px;text-align:center;top:2.4px;font-size:12.3px;line-height:14px;color:#242424;text-shadow:0 0 0.5px #242424">16</span></div>
<div class="b" style="left:7px;top:481.55px;width:20px;height:1px;background:#c2c2c2;"></div>
<div class="b" style="left:2.5px;top:482.55px;width:24px;height:16.25px;overflow:hidden"><span class="t" style="left:0;width:23px;text-align:center;top:1.45px;font-size:12.3px;line-height:14px;color:#242424;text-shadow:0 0 0.5px #242424">17</span></div>
<div class="b" style="left:7px;top:498.3px;width:20px;height:1px;background:#c2c2c2;"></div>
<div class="b" style="left:2.5px;top:499.3px;width:24px;height:16.2px;overflow:hidden"><span class="t" style="left:0;width:23px;text-align:center;top:1.7px;font-size:12.3px;line-height:14px;color:#242424;text-shadow:0 0 0.5px #242424">18</span></div>
<div class="b" style="left:7px;top:515px;width:20px;height:1px;background:#c2c2c2;"></div>
<div class="b" style="left:2.5px;top:516px;width:24px;height:16.3px;overflow:hidden"><span class="t" style="left:0;width:23px;text-align:center;top:2px;font-size:12.3px;line-height:14px;color:#242424;text-shadow:0 0 0.5px #242424">19</span></div>
<div class="b" style="left:7px;top:531.8px;width:20px;height:1px;background:#c2c2c2;"></div>
<div class="b" style="left:2.5px;top:532.8px;width:24px;height:16.2px;overflow:hidden"><span class="t" style="left:0;width:23px;text-align:center;top:2.2px;font-size:12.3px;line-height:14px;color:#242424;text-shadow:0 0 0.5px #242424">20</span></div>
<div class="b" style="left:7px;top:548.5px;width:20px;height:1px;background:#c2c2c2;"></div>
<div class="b" style="left:2.5px;top:549.5px;width:24px;height:16.2px;overflow:hidden"><span class="t" style="left:0;width:23px;text-align:center;top:1.5px;font-size:12.3px;line-height:14px;color:#242424;text-shadow:0 0 0.5px #242424">21</span></div>
<div class="b" style="left:7px;top:565.2px;width:20px;height:1px;background:#c2c2c2;"></div>
<div class="b" style="left:2.5px;top:566.2px;width:24px;height:16.3px;overflow:hidden"><span class="t" style="left:0;width:23px;text-align:center;top:1.8px;font-size:12.3px;line-height:14px;color:#242424;text-shadow:0 0 0.5px #242424">22</span></div>
<div class="b" style="left:7px;top:582px;width:20px;height:1px;background:#c2c2c2;"></div>
<div class="b" style="left:2.5px;top:583px;width:24px;height:16.2px;overflow:hidden"><span class="t" style="left:0;width:23px;text-align:center;top:2px;font-size:12.3px;line-height:14px;color:#242424;text-shadow:0 0 0.5px #242424">23</span></div>
<div class="b" style="left:7px;top:598.7px;width:20px;height:1px;background:#c2c2c2;"></div>
<div class="b" style="left:2.5px;top:599.7px;width:24px;height:16.2px;overflow:hidden"><span class="t" style="left:0;width:23px;text-align:center;top:1.3px;font-size:12.3px;line-height:14px;color:#242424;text-shadow:0 0 0.5px #242424">24</span></div>
<div class="b" style="left:7px;top:615.4px;width:20px;height:1px;background:#c2c2c2;"></div>
<div class="b" style="left:2.5px;top:616.4px;width:24px;height:16.2px;overflow:hidden"><span class="t" style="left:0;width:23px;text-align:center;top:1.6px;font-size:12.3px;line-height:14px;color:#242424;text-shadow:0 0 0.5px #242424">25</span></div>
<div class="b" style="left:7px;top:632.1px;width:20px;height:1px;background:#c2c2c2;"></div>
<div class="b" style="left:2.5px;top:633.1px;width:24px;height:16.2px;overflow:hidden"><span class="t" style="left:0;width:23px;text-align:center;top:1.9px;font-size:12.3px;line-height:14px;color:#242424;text-shadow:0 0 0.5px #242424">26</span></div>
<div class="b" style="left:7px;top:648.8px;width:20px;height:1px;background:#c2c2c2;"></div>
<div class="b" style="left:2.5px;top:649.8px;width:24px;height:16.4px;overflow:hidden"><span class="t" style="left:0;width:23px;text-align:center;top:2.2px;font-size:12.3px;line-height:14px;color:#242424;text-shadow:0 0 0.5px #242424">27</span></div>
<div class="b" style="left:7px;top:665.7px;width:20px;height:1px;background:#c2c2c2;"></div>
<div class="b" style="left:2.5px;top:666.7px;width:24px;height:16.5px;overflow:hidden"><span class="t" style="left:0;width:23px;text-align:center;top:2.3px;font-size:12.3px;line-height:14px;color:#242424;text-shadow:0 0 0.5px #242424">28</span></div>
<div class="b" style="left:7px;top:682.7px;width:20px;height:1px;background:#c2c2c2;"></div>
<div class="b" style="left:2.5px;top:683.7px;width:24px;height:16.6px;overflow:hidden"><span class="t" style="left:0;width:23px;text-align:center;top:2.3px;font-size:12.3px;line-height:14px;color:#242424;text-shadow:0 0 0.5px #242424">29</span></div>
<div class="b" style="left:7px;top:699.8px;width:20px;height:1px;background:#c2c2c2;"></div>
<div class="b" style="left:2.5px;top:700.8px;width:24px;height:16.6px;overflow:hidden"><span class="t" style="left:0;width:23px;text-align:center;top:2.2px;font-size:12.3px;line-height:14px;color:#242424;text-shadow:0 0 0.5px #242424">30</span></div>
<div class="b" style="left:7px;top:716.9px;width:20px;height:1px;background:#c2c2c2;"></div>
<div class="b" style="left:2.5px;top:717.9px;width:24px;height:16.5px;overflow:hidden"><span class="t" style="left:0;width:23px;text-align:center;top:2.1px;font-size:12.3px;line-height:14px;color:#242424;text-shadow:0 0 0.5px #242424">31</span></div>
<div class="b" style="left:7px;top:733.9px;width:20px;height:1px;background:#c2c2c2;"></div>
<div class="b" style="left:2.5px;top:734.9px;width:24px;height:16.7px;overflow:hidden"><span class="t" style="left:0;width:23px;text-align:center;top:2.1px;font-size:12.3px;line-height:14px;color:#242424;text-shadow:0 0 0.5px #242424">32</span></div>
<div class="b" style="left:7px;top:751.1px;width:20px;height:1px;background:#c2c2c2;"></div>
<div class="b" style="left:2.5px;top:752.1px;width:24px;height:9.9px;overflow:hidden"><span class="t" style="left:0;width:23px;text-align:center;top:1.9px;font-size:12.3px;line-height:14px;color:#242424;text-shadow:0 0 0.5px #242424">33</span></div>
<div class="b" style="left:7px;top:768.1px;width:20px;height:1px;background:#c2c2c2;"></div>
<span class="t s" style="left:101.5px;top:296px;font-size:12.3px;line-height:14px;color:#4a70cc;letter-spacing:0.07px;">Nur in den gelben Feldern werden Eintragungen vorgenommen!</span>
<span class="t s" style="left:101.9px;top:334px;font-size:12.3px;line-height:14px;color:#1e1e1e;letter-spacing:0.22px;">Wählen Sie das Jahr aus!</span>
<span class="t s" style="left:102.5px;top:367px;font-size:12.3px;line-height:14px;color:#1e1e1e;">Ihr Vorname lautet:</span>
<span class="t s" style="left:102.5px;top:401px;font-size:12.3px;line-height:14px;color:#1e1e1e;">Ihr Nachname lautet:</span>
<span class="t s" style="left:102.5px;top:434px;font-size:12.3px;line-height:14px;color:#1e1e1e;">Kurzzeichen/Gruppe:</span>
<div class="b" style="left:355.6px;top:331.4px;width:127.6px;height:16.4px;background:#f8f5c6;"></div>
<span class="t s" style="left:405.68px;top:334px;font-size:12.3px;line-height:14px;color:#1e1e1e;">2018</span>
<div class="b" style="left:355.6px;top:365.1px;width:127.6px;height:16.4px;background:#f8f5c6;"></div>
<span class="t s" style="left:407.34px;top:367px;font-size:12.3px;line-height:14px;color:#1e1e1e;">Max</span>
<div class="b" style="left:355.6px;top:398.6px;width:127.6px;height:16.4px;background:#f8f5c6;"></div>
<span class="t s" style="left:385.12px;top:401px;font-size:12.3px;line-height:14px;color:#1e1e1e;">Mustermann</span>
<div class="b" style="left:355.6px;top:432px;width:127.6px;height:16.3px;background:#f8f5c6;"></div>
<span class="t s" style="left:397.72px;top:434px;font-size:12.3px;line-height:14px;color:#1e1e1e;">Zeichen</span>
<div class="b" style="left:649.7px;top:330.4px;width:102.5px;height:22px;background:#f1f0f1;box-sizing:border-box;border-top:1px solid #fafafa;border-left:1px solid #fafafa;border-right:2px solid #7b7b7b;border-bottom:2px solid #7b7b7b;"></div>
<span class="t s" style="left:663.68px;top:335px;font-size:12.3px;line-height:14px;color:#1e1e1e;letter-spacing:0.23px;">Aktualisieren</span>
<span class="t s" style="left:650.65px;top:367px;font-size:12.3px;line-height:14px;color:#1e1e1e;letter-spacing:0.03px;">Übertrag vom letzten Jahr:</span>
<span class="t s" style="left:651.58px;top:401px;font-size:12.3px;line-height:14px;color:#1e1e1e;letter-spacing:-0.02px;">Anzahl Urlaubstage:</span>
<span class="t s" style="left:651.16px;top:434px;font-size:12.3px;line-height:14px;color:#1e1e1e;letter-spacing:0px;">verbleibender Resturlaub:</span>
<div class="b" style="left:803.3px;top:364.5px;width:44.7px;height:17.5px;background:#f8f5c6;"></div>
<span class="t s" style="left:831.4px;top:367px;font-size:12.3px;line-height:14px;color:#1e1e1e;">40</span>
<div class="b" style="left:803.3px;top:398px;width:44.7px;height:17.5px;background:#f8f5c6;"></div>
<span class="t s" style="left:831.4px;top:401px;font-size:12.3px;line-height:14px;color:#1e1e1e;">30</span>
<div class="b" style="left:803.3px;top:431.4px;width:44.7px;height:17.4px;background:#a5dde3;"></div>
<span class="t s" style="left:821.14px;top:434px;font-size:12.3px;line-height:14px;color:#1e1e1e;">30,0</span>
<div class="b" style="left:98.9px;top:464.1px;width:383.5px;height:17.95px;background:#a0a036;"></div>
<div class="b" style="left:98.9px;top:482.05px;width:99.3px;height:201.15px;background:#a0a036;"></div>
<div class="b" style="left:198.2px;top:482.05px;width:80.4px;height:201.15px;background:linear-gradient(90deg,#f4f0be,#f8f5d2);"></div>
<div class="b" style="left:278.6px;top:482.05px;width:203.8px;height:201.15px;background:#f5f4f5;"></div>
<span class="t s" style="left:222.44px;top:467px;font-size:12.3px;line-height:14px;color:#161400;font-weight:bold;">h/Tag</span>
<span class="t s" style="left:283.52px;top:467px;font-size:12.3px;line-height:14px;color:#161400;font-weight:bold;">Arbeitstage</span>
<span class="t s" style="left:384.21px;top:467px;font-size:12.3px;line-height:14px;color:#161400;font-weight:bold;">Sollstunden</span>
<span class="t s" style="left:156.05px;top:484px;font-size:12.3px;line-height:14px;color:#161400;font-weight:bold;">Januar</span>
<span class="t s" style="left:229.42px;top:483px;font-size:12.9px;line-height:15px;color:#1e1e1e;">8,5</span>
<span class="t s" style="left:310.13px;top:483px;font-size:12.9px;line-height:15px;color:#1e1e1e;">22</span>
<span class="t s" style="left:408.27px;top:483px;font-size:12.9px;line-height:15px;color:#1e1e1e;">187</span>
<span class="t s" style="left:150.59px;top:501px;font-size:12.3px;line-height:14px;color:#161400;font-weight:bold;">Februar</span>
<span class="t s" style="left:229.42px;top:500px;font-size:12.9px;line-height:15px;color:#1e1e1e;">8,5</span>
<span class="t s" style="left:310.05px;top:500px;font-size:12.9px;line-height:15px;color:#1e1e1e;">20</span>
<span class="t s" style="left:408.2px;top:500px;font-size:12.9px;line-height:15px;color:#1e1e1e;">170</span>
<span class="t s" style="left:168.62px;top:518px;font-size:12.3px;line-height:14px;color:#161400;font-weight:bold;">März</span>
<span class="t s" style="left:229.42px;top:517px;font-size:12.9px;line-height:15px;color:#1e1e1e;">8,5</span>
<span class="t s" style="left:310.12px;top:517px;font-size:12.9px;line-height:15px;color:#1e1e1e;">21</span>
<span class="t s" style="left:402.84px;top:517px;font-size:12.9px;line-height:15px;color:#1e1e1e;">178,5</span>
<span class="t s" style="left:169.05px;top:534px;font-size:12.3px;line-height:14px;color:#161400;font-weight:bold;">April</span>
<span class="t s" style="left:229.42px;top:533px;font-size:12.9px;line-height:15px;color:#1e1e1e;">8,5</span>
<span class="t s" style="left:310.05px;top:533px;font-size:12.9px;line-height:15px;color:#1e1e1e;">20</span>
<span class="t s" style="left:408.2px;top:533px;font-size:12.9px;line-height:15px;color:#1e1e1e;">170</span>
<span class="t s" style="left:176.57px;top:551px;font-size:12.3px;line-height:14px;color:#161400;font-weight:bold;">Mai</span>
<span class="t s" style="left:229.42px;top:550px;font-size:12.9px;line-height:15px;color:#1e1e1e;">8,5</span>
<span class="t s" style="left:310.05px;top:550px;font-size:12.9px;line-height:15px;color:#1e1e1e;">20</span>
<span class="t s" style="left:408.2px;top:550px;font-size:12.9px;line-height:15px;color:#1e1e1e;">170</span>
<span class="t s" style="left:171.79px;top:568px;font-size:12.3px;line-height:14px;color:#161400;font-weight:bold;">Juni</span>
<span class="t s" style="left:229.42px;top:567px;font-size:12.9px;line-height:15px;color:#1e1e1e;">8,5</span>
<span class="t s" style="left:310.12px;top:567px;font-size:12.9px;line-height:15px;color:#1e1e1e;">21</span>
<span class="t s" style="left:402.84px;top:567px;font-size:12.9px;line-height:15px;color:#1e1e1e;">178,5</span>
<span class="t s" style="left:175.88px;top:585px;font-size:12.3px;line-height:14px;color:#161400;font-weight:bold;">Juli</span>
<span class="t s" style="left:229.42px;top:584px;font-size:12.9px;line-height:15px;color:#1e1e1e;">8,5</span>
<span class="t s" style="left:310.13px;top:584px;font-size:12.9px;line-height:15px;color:#1e1e1e;">22</span>
<span class="t s" style="left:408.27px;top:584px;font-size:12.9px;line-height:15px;color:#1e1e1e;">187</span>
<span class="t s" style="left:153.99px;top:601px;font-size:12.3px;line-height:14px;color:#161400;font-weight:bold;">August</span>
<span class="t s" style="left:229.42px;top:600px;font-size:12.9px;line-height:15px;color:#1e1e1e;">8,5</span>
<span class="t s" style="left:310.08px;top:600px;font-size:12.9px;line-height:15px;color:#1e1e1e;">23</span>
<span class="t s" style="left:402.84px;top:600px;font-size:12.9px;line-height:15px;color:#1e1e1e;">195,5</span>
<span class="t s" style="left:132.81px;top:618px;font-size:12.3px;line-height:14px;color:#161400;font-weight:bold;">September</span>
<span class="t s" style="left:229.42px;top:617px;font-size:12.9px;line-height:15px;color:#1e1e1e;">8,5</span>
<span class="t s" style="left:310.05px;top:617px;font-size:12.9px;line-height:15px;color:#1e1e1e;">20</span>
<span class="t s" style="left:408.2px;top:617px;font-size:12.9px;line-height:15px;color:#1e1e1e;">170</span>
<span class="t s" style="left:149.23px;top:635px;font-size:12.3px;line-height:14px;color:#161400;font-weight:bold;">Oktober</span>
<span class="t s" style="left:229.42px;top:634px;font-size:12.9px;line-height:15px;color:#1e1e1e;">8,5</span>
<span class="t s" style="left:310.12px;top:634px;font-size:12.9px;line-height:15px;color:#1e1e1e;">21</span>
<span class="t s" style="left:402.84px;top:634px;font-size:12.9px;line-height:15px;color:#1e1e1e;">178,5</span>
<span class="t s" style="left:136.23px;top:652px;font-size:12.3px;line-height:14px;color:#161400;font-weight:bold;">November</span>
<span class="t s" style="left:229.42px;top:651px;font-size:12.9px;line-height:15px;color:#1e1e1e;">8,5</span>
<span class="t s" style="left:310.13px;top:651px;font-size:12.9px;line-height:15px;color:#1e1e1e;">22</span>
<span class="t s" style="left:408.27px;top:651px;font-size:12.9px;line-height:15px;color:#1e1e1e;">187</span>
<span class="t s" style="left:137.59px;top:669px;font-size:12.3px;line-height:14px;color:#161400;font-weight:bold;">Dezember</span>
<span class="t s" style="left:229.42px;top:668px;font-size:12.9px;line-height:15px;color:#1e1e1e;">8,5</span>
<span class="t s" style="left:309.91px;top:668px;font-size:12.9px;line-height:15px;color:#1e1e1e;">18</span>
<span class="t s" style="left:408.23px;top:668px;font-size:12.9px;line-height:15px;color:#1e1e1e;">153</span>
<div class="b" style="left:98px;top:463px;width:385px;height:2px;background:rgba(18,18,10,0.84);"></div>
<div class="b" style="left:98px;top:481px;width:385px;height:2px;background:rgba(18,18,10,0.84);"></div>
<div class="b" style="left:98px;top:682px;width:385px;height:2px;background:rgba(18,18,10,0.84);"></div>
<div class="b" style="left:99px;top:498px;width:383px;height:1px;background:#16160f;"></div>
<div class="b" style="left:99px;top:515px;width:383px;height:1px;background:#16160f;"></div>
<div class="b" style="left:99px;top:532px;width:383px;height:1px;background:#16160f;"></div>
<div class="b" style="left:99px;top:548px;width:383px;height:1px;background:#16160f;"></div>
<div class="b" style="left:99px;top:565px;width:383px;height:1px;background:#16160f;"></div>
<div class="b" style="left:99px;top:582px;width:383px;height:1px;background:#16160f;"></div>
<div class="b" style="left:99px;top:599px;width:383px;height:1px;background:#16160f;"></div>
<div class="b" style="left:99px;top:615px;width:383px;height:1px;background:#16160f;"></div>
<div class="b" style="left:99px;top:632px;width:383px;height:1px;background:#16160f;"></div>
<div class="b" style="left:99px;top:649px;width:383px;height:1px;background:#16160f;"></div>
<div class="b" style="left:99px;top:666px;width:383px;height:1px;background:#16160f;"></div>
<div class="b" style="left:98px;top:463px;width:2px;height:221px;background:rgba(18,18,10,0.84);"></div>
<div class="b" style="left:481px;top:463px;width:2px;height:221px;background:rgba(18,18,10,0.84);"></div>
<div class="b" style="left:198px;top:463px;width:1px;height:221px;background:#16160f;"></div>
<div class="b" style="left:278px;top:463px;width:1px;height:221px;background:#16160f;"></div>
<div class="b" style="left:356px;top:463px;width:1px;height:221px;background:#16160f;"></div>
<div class="b" style="left:577.2px;top:464.1px;width:269.6px;height:17.95px;background:#a0a036;"></div>
<div class="b" style="left:577.2px;top:482.05px;width:225.9px;height:235.35px;background:#f5f4f5;"></div>
<div class="b" style="left:803.1px;top:482.05px;width:43.7px;height:235.35px;background:#f8f5c6;"></div>
<span class="t s" style="left:594.09px;top:467px;font-size:12.3px;line-height:14px;color:#161400;font-weight:bold;">Datum</span>
<span class="t s" style="left:656.7px;top:467px;font-size:12.3px;line-height:14px;color:#161400;font-weight:bold;">WT</span>
<span class="t s" style="left:719.18px;top:467px;font-size:12.3px;line-height:14px;color:#161400;font-weight:bold;">Feiertag</span>
<span class="t s" style="left:812.13px;top:467px;font-size:12.3px;line-height:14px;color:#161400;font-weight:bold;">halb</span>
<span class="t s" style="left:584.33px;top:484px;font-size:12.55px;line-height:14px;color:#1e1e1e;">01.01.2018</span>
<span class="t s" style="left:663.43px;top:484px;font-size:12.3px;line-height:14px;color:#1e1e1e;">Mo</span>
<span class="t s" style="left:685.1px;top:484px;font-size:12.3px;line-height:14px;color:#1e1e1e;">Neujahr</span>
<span class="t s" style="left:584.33px;top:501px;font-size:12.55px;line-height:14px;color:#1e1e1e;">30.03.2018</span>
<span class="t s" style="left:668.59px;top:501px;font-size:12.3px;line-height:14px;color:#1e1e1e;">Fr</span>
<span class="t s" style="left:685.1px;top:501px;font-size:12.3px;line-height:14px;color:#1e1e1e;">Karfreitag</span>
<span class="t s" style="left:584.33px;top:518px;font-size:12.55px;line-height:14px;color:#1e1e1e;">01.04.2018</span>
<span class="t s" style="left:665.47px;top:518px;font-size:12.3px;line-height:14px;color:#1e1e1e;">So</span>
<span class="t s" style="left:685.1px;top:518px;font-size:12.3px;line-height:14px;color:#1e1e1e;">Ostersonntag</span>
<span class="t s" style="left:584.33px;top:534px;font-size:12.55px;line-height:14px;color:#1e1e1e;">02.04.2018</span>
<span class="t s" style="left:663.43px;top:534px;font-size:12.3px;line-height:14px;color:#1e1e1e;">Mo</span>
<span class="t s" style="left:685.1px;top:534px;font-size:12.3px;line-height:14px;color:#1e1e1e;">Ostermontag</span>
<span class="t s" style="left:584.33px;top:551px;font-size:12.55px;line-height:14px;color:#1e1e1e;">01.05.2018</span>
<span class="t s" style="left:669.21px;top:551px;font-size:12.3px;line-height:14px;color:#1e1e1e;">Di</span>
<span class="t s" style="left:685.1px;top:551px;font-size:12.3px;line-height:14px;color:#1e1e1e;">Tag d. Arbeit</span>
<span class="t s" style="left:584.33px;top:568px;font-size:12.55px;line-height:14px;color:#1e1e1e;">10.05.2018</span>
<span class="t s" style="left:664.79px;top:568px;font-size:12.3px;line-height:14px;color:#1e1e1e;">Do</span>
<span class="t s" style="left:685.1px;top:568px;font-size:12.3px;line-height:14px;color:#1e1e1e;">Himmelfahrt</span>
<span class="t s" style="left:584.33px;top:585px;font-size:12.55px;line-height:14px;color:#1e1e1e;">20.05.2018</span>
<span class="t s" style="left:665.47px;top:585px;font-size:12.3px;line-height:14px;color:#1e1e1e;">So</span>
<span class="t s" style="left:685.1px;top:585px;font-size:12.3px;line-height:14px;color:#1e1e1e;">Pfingssonntag</span>
<span class="t s" style="left:584.33px;top:601px;font-size:12.55px;line-height:14px;color:#1e1e1e;">21.05.2018</span>
<span class="t s" style="left:663.43px;top:601px;font-size:12.3px;line-height:14px;color:#1e1e1e;">Mo</span>
<span class="t s" style="left:685.1px;top:601px;font-size:12.3px;line-height:14px;color:#1e1e1e;">Pfingstmontag</span>
<span class="t s" style="left:584.33px;top:618px;font-size:12.55px;line-height:14px;color:#1e1e1e;">03.10.2018</span>
<span class="t s" style="left:667.85px;top:618px;font-size:12.3px;line-height:14px;color:#1e1e1e;">Mi</span>
<span class="t s" style="left:685.1px;top:618px;font-size:12.3px;line-height:14px;color:#1e1e1e;">Tag d. Einheit</span>
<span class="t s" style="left:584.33px;top:635px;font-size:12.55px;line-height:14px;color:#1e1e1e;">31.10.2018</span>
<span class="t s" style="left:667.85px;top:635px;font-size:12.3px;line-height:14px;color:#1e1e1e;">Mi</span>
<span class="t s" style="left:685.1px;top:635px;font-size:12.3px;line-height:14px;color:#1e1e1e;">Reformationstag</span>
<span class="t s" style="left:584.33px;top:652px;font-size:12.55px;line-height:14px;color:#1e1e1e;">24.12.2018</span>
<span class="t s" style="left:663.43px;top:652px;font-size:12.3px;line-height:14px;color:#1e1e1e;">Mo</span>
<span class="t s" style="left:685.1px;top:652px;font-size:12.3px;line-height:14px;color:#1e1e1e;">Heiligabend</span>
<span class="t s" style="left:820.84px;top:652px;font-size:12.3px;line-height:14px;color:#1e1e1e;">X</span>
<span class="t s" style="left:584.33px;top:669px;font-size:12.55px;line-height:14px;color:#1e1e1e;">25.12.2018</span>
<span class="t s" style="left:669.21px;top:669px;font-size:12.3px;line-height:14px;color:#1e1e1e;">Di</span>
<span class="t s" style="left:685.1px;top:669px;font-size:12.3px;line-height:14px;color:#1e1e1e;">1.Weihnachtstag</span>
<span class="t s" style="left:584.33px;top:686px;font-size:12.55px;line-height:14px;color:#1e1e1e;">26.12.2018</span>
<span class="t s" style="left:667.85px;top:686px;font-size:12.3px;line-height:14px;color:#1e1e1e;">Mi</span>
<span class="t s" style="left:685.1px;top:686px;font-size:12.3px;line-height:14px;color:#1e1e1e;">2.Weihnachtstag</span>
<span class="t s" style="left:584.33px;top:703px;font-size:12.55px;line-height:14px;color:#1e1e1e;">31.12.2018</span>
<span class="t s" style="left:663.43px;top:703px;font-size:12.3px;line-height:14px;color:#1e1e1e;">Mo</span>
<span class="t s" style="left:685.1px;top:703px;font-size:12.3px;line-height:14px;color:#1e1e1e;">Silvester</span>
<span class="t s" style="left:820.84px;top:703px;font-size:12.3px;line-height:14px;color:#1e1e1e;">X</span>
<div class="b" style="left:576px;top:463px;width:272px;height:2px;background:rgba(18,18,10,0.84);"></div>
<div class="b" style="left:576px;top:481px;width:272px;height:2px;background:rgba(18,18,10,0.84);"></div>
<div class="b" style="left:576px;top:716px;width:272px;height:2px;background:rgba(18,18,10,0.84);"></div>
<div class="b" style="left:577px;top:498px;width:270px;height:1px;background:#16160f;"></div>
<div class="b" style="left:577px;top:515px;width:270px;height:1px;background:#16160f;"></div>
<div class="b" style="left:577px;top:532px;width:270px;height:1px;background:#16160f;"></div>
<div class="b" style="left:577px;top:548px;width:270px;height:1px;background:#16160f;"></div>
<div class="b" style="left:577px;top:565px;width:270px;height:1px;background:#16160f;"></div>
<div class="b" style="left:577px;top:582px;width:270px;height:1px;background:#16160f;"></div>
<div class="b" style="left:577px;top:599px;width:270px;height:1px;background:#16160f;"></div>
<div class="b" style="left:577px;top:615px;width:270px;height:1px;background:#16160f;"></div>
<div class="b" style="left:577px;top:632px;width:270px;height:1px;background:#16160f;"></div>
<div class="b" style="left:577px;top:649px;width:270px;height:1px;background:#16160f;"></div>
<div class="b" style="left:577px;top:666px;width:270px;height:1px;background:#16160f;"></div>
<div class="b" style="left:577px;top:683px;width:270px;height:1px;background:#16160f;"></div>
<div class="b" style="left:577px;top:700px;width:270px;height:1px;background:#16160f;"></div>
<div class="b" style="left:576px;top:463px;width:2px;height:255px;background:rgba(18,18,10,0.84);"></div>
<div class="b" style="left:846px;top:463px;width:2px;height:255px;background:rgba(18,18,10,0.84);"></div>
<div class="b" style="left:649px;top:463px;width:1px;height:255px;background:#16160f;"></div>
<div class="b" style="left:683px;top:463px;width:1px;height:255px;background:#16160f;"></div>
<div class="b" style="left:803px;top:463px;width:1px;height:255px;background:#16160f;"></div>
<span class="t s" style="left:35.39px;top:726px;font-size:5.5px;line-height:6px;color:#dcdcdc;">30</span>
<div class="b" style="left:1017.5px;top:54.5px;width:2.5px;height:710.5px;background:#2e7b41;"></div>
<div class="b" style="left:0px;top:762px;width:1020px;height:3px;background:#2e7b41;"></div>
</div>
</body></html>
